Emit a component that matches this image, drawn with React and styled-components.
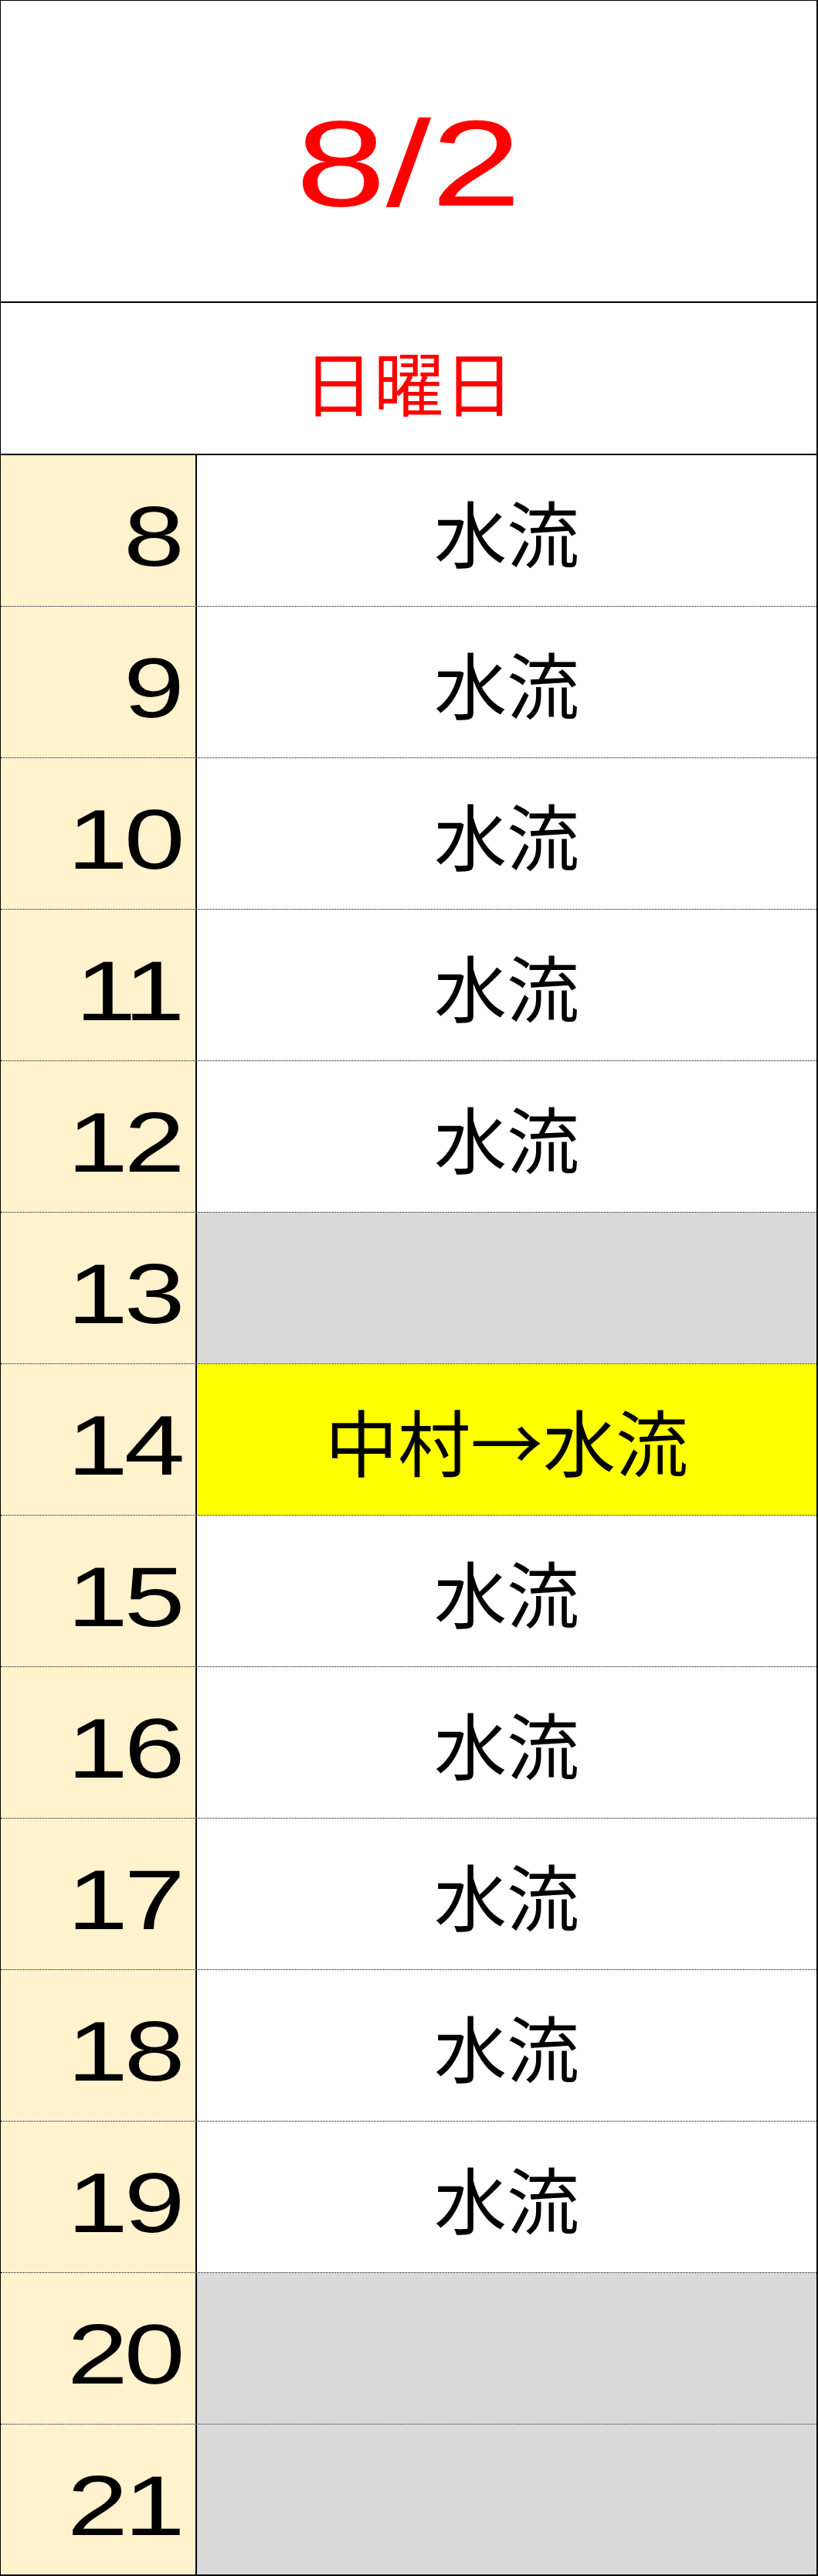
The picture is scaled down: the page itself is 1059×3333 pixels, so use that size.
import styled, { createGlobalStyle } from "styled-components";

const GlobalStyle = createGlobalStyle`
    html, body {
        margin: 0;
        padding: 0;
        background: #ffffff;
    }
`;

const Sheet = styled.div`
    width: 1059px;
    box-sizing: border-box;
    border-top: 1px solid #000;
    border-left: 1px solid #000;
    border-right: 2px solid #000;
    border-bottom: 2px solid #000;
    font-family: "Liberation Sans", Arial, sans-serif;
`;

const DateCell = styled.div`
    height: 391px;
    box-sizing: border-box;
    border-bottom: 2px solid #000;
    padding-top: 30px;
    display: flex;
    align-items: center;
    justify-content: center;
    color: #ff0000;
`;

const DateText = styled.span`
    display: inline-block;
    font-size: 158px;
    line-height: 1;
    transform: scaleX(1.33);
`;

const DayCell = styled.div`
    height: 197px;
    box-sizing: border-box;
    border-bottom: 2px solid #000;
    padding-top: 6px;
    display: flex;
    align-items: center;
    justify-content: center;
    color: #ff0000;
    font-family: "Noto Sans CJK JP", sans-serif;
    font-size: 91px;
    line-height: 1;
`;

const Row = styled.div`
    display: grid;
    grid-template-columns: 254px 1fr;
    height: 196px;
    box-sizing: border-box;

    & + & {
        border-top: 1px dotted #000;
    }
    &:first-child,
    &:last-child {
        height: 195px;
    }
`;

const Hour = styled.div`
    background: #fff2cc;
    border-right: 2px solid #000;
    display: flex;
    align-items: center;
    justify-content: flex-end;
    padding: 16px 19px 0 0;
`;

const HourText = styled.span`
    display: inline-block;
    font-size: 109px;
    line-height: 1;
    letter-spacing: -4px;
    color: #000;
    transform: scaleX(1.3);
    transform-origin: right center;
`;

const Slot = styled.div`
    background: ${(p) => p.$bg};
    display: flex;
    align-items: center;
    justify-content: center;
    font-family: "Noto Sans CJK JP", sans-serif;
    font-size: 94px;
    line-height: 1;
    color: #000;
`;

const schedule = [
    { hour: 8, who: "水流" },
    { hour: 9, who: "水流" },
    { hour: 10, who: "水流" },
    { hour: 11, who: "水流" },
    { hour: 12, who: "水流" },
    { hour: 13, who: "", bg: "#d9d9d9" },
    { hour: 14, who: "中村→水流", bg: "#ffff00" },
    { hour: 15, who: "水流" },
    { hour: 16, who: "水流" },
    { hour: 17, who: "水流" },
    { hour: 18, who: "水流" },
    { hour: 19, who: "水流" },
    { hour: 20, who: "", bg: "#d9d9d9" },
    { hour: 21, who: "", bg: "#d9d9d9" },
];

export default function App() {
    return <>
        <GlobalStyle />
        <Sheet>
            <DateCell>
                <DateText>8/2</DateText>
            </DateCell>
            <DayCell>日曜日</DayCell>
            <div>
                {
                    schedule.map((s) => (
                        <Row key={s.hour}>
                            <Hour><HourText>{s.hour}</HourText></Hour>
                            <Slot $bg={s.bg ?? "#ffffff"}>{s.who}</Slot>
                        </Row>
                    ))
                }
            </div>
        </Sheet>
    </>
}
